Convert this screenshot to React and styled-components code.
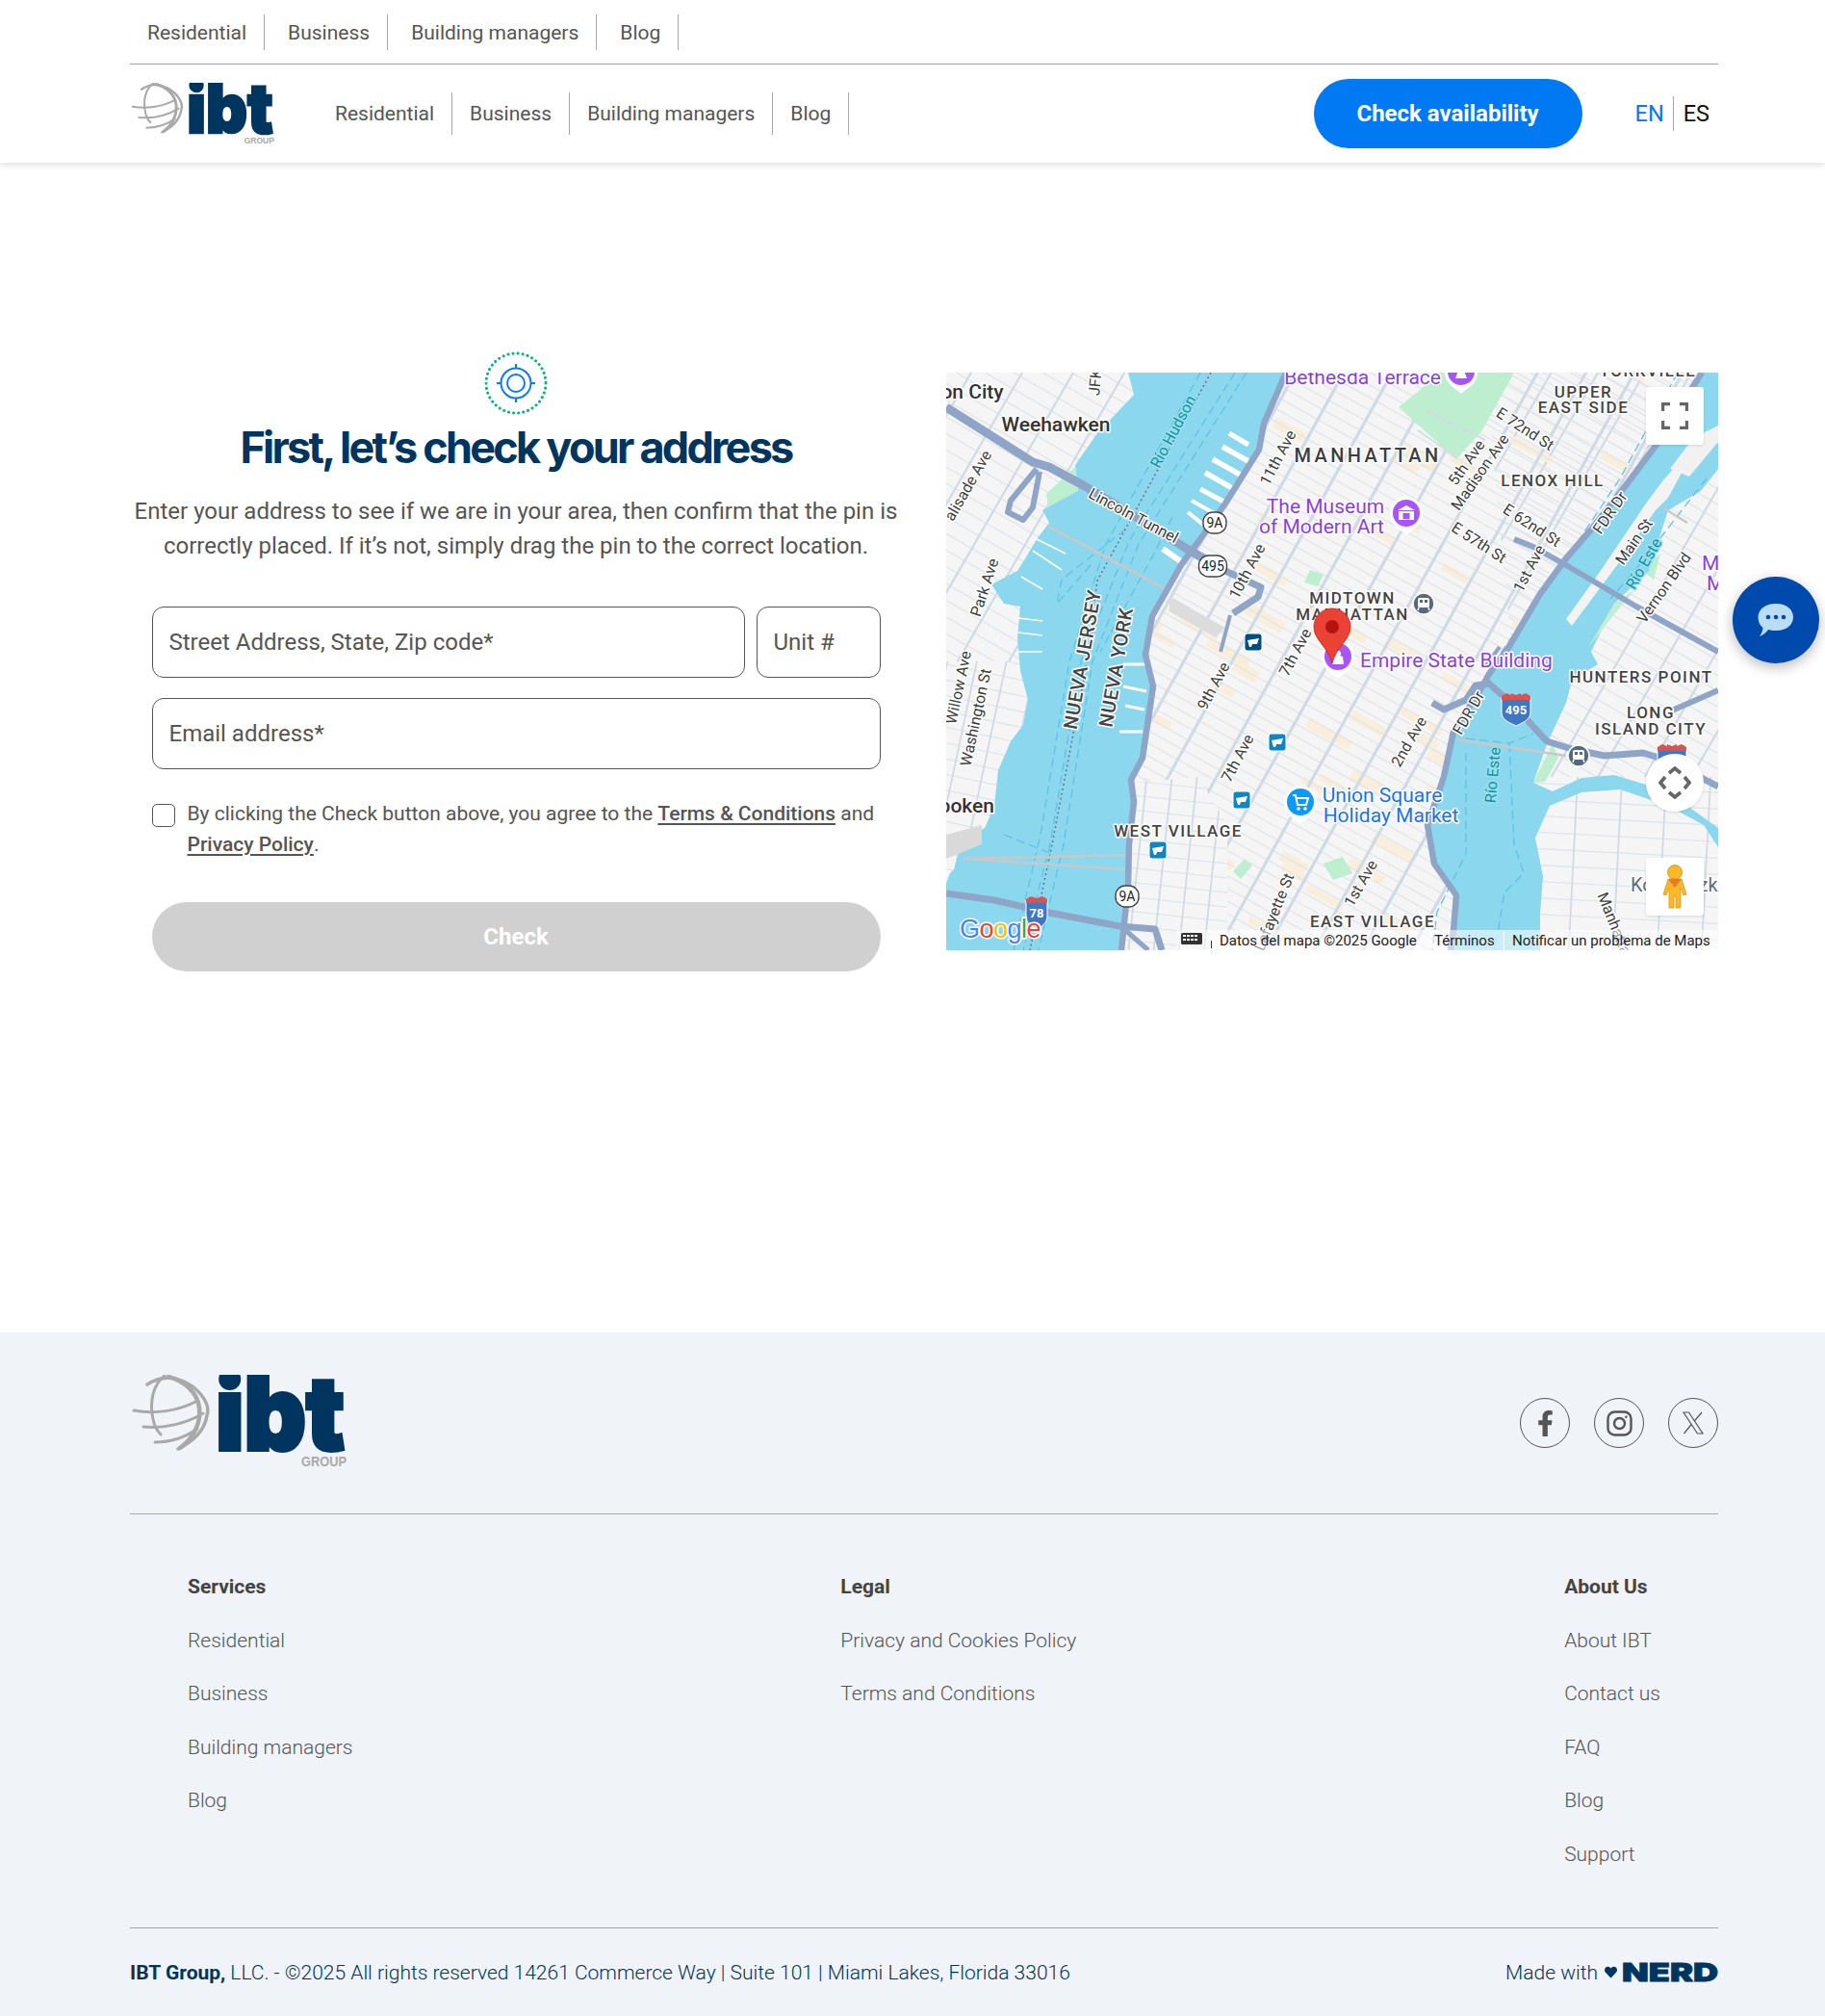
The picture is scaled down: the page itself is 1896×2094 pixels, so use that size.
import React from "react";
import styled, { createGlobalStyle, css } from "styled-components";
import { FaFacebookF, FaHeart } from "react-icons/fa";

const Global = createGlobalStyle`
  html, body { margin: 0; padding: 0; background: #fff; }
  body { font-family: Roboto, "Liberation Sans", sans-serif; color: #555; width: 1896px; }
  * { box-sizing: border-box; }
  a { color: inherit; text-decoration: none; }
  ::placeholder { color: #555; opacity: 1; }
`;

const Page = styled.div`
  position: relative;
  width: 1896px;
  height: 2094px;
  overflow: hidden;
  display: flex;
  flex-direction: column;
`;
const Header = styled.header`
  position: relative;
  z-index: 2;
  background: #fff;
  height: 169px;
  box-shadow: 0 2px 7px rgba(0, 0, 0, 0.14);
`;
const Container = styled.div`
  width: 1650px;
  margin-left: 135px;
`;
const TopRow = styled.div`
  height: 67px;
  padding-top: 1px;
  border-bottom: 1px solid #a3a3a3;
  display: flex;
  align-items: center;
`;
const MainRow = styled.div`
  height: 102px;
  display: flex;
  align-items: center;
`;
const NavList = styled.nav`
  display: flex;
  gap: ${(p) => p.$gap}px;
  margin-left: ${(p) => p.$offset}px;
`;
const NavItem = styled.a`
  display: flex;
  align-items: center;
  height: ${(p) => p.$height}px;
  padding: 0 18px;
  font-size: 21px;
  color: #555;
  border-right: 1px solid #a8a8a8;
`;
const CTA = styled.a`
  margin-left: auto;
  width: 279px;
  height: 72px;
  border-radius: 36px;
  background: #0079f2;
  color: #fff;
  font-size: 24px;
  font-weight: 700;
  display: flex;
  align-items: center;
  justify-content: center;
`;
const Lang = styled.div`
  display: flex;
  margin: 0 9px 0 55px;
`;
const LangItem = styled.a`
  height: 36px;
  display: flex;
  align-items: center;
  font-size: 23.5px;
  color: ${(p) => (p.$active ? "#0079f2" : "#111")};
  ${(p) =>
    p.$active
      ? css`
          padding-right: 9px;
          border-right: 1px solid #a8a8a8;
        `
      : css`
          padding-left: 10px;
        `}
`;
const Main = styled.main`
  flex: 1;
  padding-top: 196px;
  height: 1215px;
`;
const Columns = styled.div`
  display: grid;
  grid-template-columns: 802px 802px;
  gap: 46px;
  align-items: center;
`;
const FormColumn = styled.section`
  display: flex;
  flex-direction: column;
  align-items: center;
`;
const Title = styled.h1`
  margin: 2px 0 0;
  font-family: Inter, sans-serif;
  font-weight: 650;
  font-size: 45px;
  line-height: 64px;
  letter-spacing: -2.75px;
  color: #00355f;
  white-space: nowrap;
`;
const Lead = styled.p`
  margin: 16px 0 0;
  font-size: 24px;
  line-height: 36px;
  color: #555;
  text-align: center;
  white-space: nowrap;
`;
const Form = styled.form`
  width: 757px;
  margin-top: 45px;
  display: flex;
  flex-direction: column;
`;
const InputRow = styled.div`
  display: flex;
  gap: 12px;
  margin-bottom: 21px;
`;
const Field = styled.input`
  height: 74px;
  width: ${(p) => p.$width || "100%"};
  flex: ${(p) => (p.$width ? "none" : 1)};
  min-width: 0;
  border: 1px solid #555;
  border-radius: 12px;
  padding: 0 17px;
  font: 400 24px Roboto, sans-serif;
  color: #555;
  background: #fff;
`;
const ConsentRow = styled.label`
  display: flex;
  gap: 13px;
  margin-top: 9px;
  font-size: 21px;
  line-height: 32px;
  color: #555;
`;
const Box = styled.span`
  flex: none;
  width: 24px;
  height: 24px;
  margin-top: 6px;
  border: 1px solid #555;
  border-radius: 5px;
  background: #fff;
`;
const StrongLink = styled.a`
  font-weight: 500;
  text-decoration: underline;
  text-underline-offset: 3px;
`;
const Submit = styled.button`
  margin-top: 44px;
  height: 72px;
  border: 0;
  border-radius: 36px;
  background: #d0d0d0;
  color: #fff;
  font: 700 24px Roboto, sans-serif;
`;
const MapBox = styled.div`
  position: relative;
  width: 802px;
  height: 600px;
  overflow: hidden;
  background: #f5f5f5;
`;
const MapSvg = styled.svg`
  display: block;
  font-family: Roboto, sans-serif;
`;
const labelKinds = {
  place: css`font-size: 21px; font-weight: 500; fill: #333;`,
  hood: css`font-size: 17px; font-weight: 500; fill: #444; letter-spacing: 1.5px;`,
  big: css`font-size: 20px; font-weight: 500; fill: #3d3d3d; letter-spacing: 3.4px;`,
  state: css`font-size: 20px; font-weight: 500; fill: #444; letter-spacing: 0.6px;`,
  road: css`font-size: 16px; font-weight: 400; fill: #3c3c3c;`,
  river: css`font-size: 16px; font-weight: 400; fill: #11929f; stroke: #9be0f0;`,
  poi: css`font-size: 21px; font-weight: 400; fill: #8a3fe0;`,
  shop: css`font-size: 21px; font-weight: 400; fill: #1a73e8;`,
  area: css`font-size: 20px; font-weight: 400; fill: #5a6e80;`,
};
const MapLabel = styled.text`
  stroke: #fff;
  stroke-width: 3px;
  stroke-linejoin: round;
  paint-order: stroke;
  dominant-baseline: middle;
  ${(p) => labelKinds[p.$kind]}
`;
const Attribution = styled.text`
  font-size: 15px;
  fill: #222;
  dominant-baseline: middle;
`;
const GoogleMark = styled.text`
  font-family: "Liberation Sans", sans-serif;
  font-size: 27px;
  font-weight: 400;
  stroke: #fff;
  stroke-width: 3px;
  paint-order: stroke;
  letter-spacing: -0.5px;
`;
const ShieldText = styled.text`
  font-size: ${(p) => p.$size || 14}px;
  font-weight: ${(p) => p.$weight || 400};
  fill: ${(p) => p.$fill || "#222"};
  text-anchor: middle;
  dominant-baseline: middle;
`;
const MapButton = styled.button`
  position: absolute;
  left: 727px;
  top: ${(p) => p.$top}px;
  width: 60px;
  height: 60px;
  padding: 0;
  border: 0;
  background: #fff;
  border-radius: ${(p) => (p.$round ? "50%" : "3px")};
  box-shadow: 0 1px 3px rgba(0, 0, 0, 0.12);
  display: flex;
  align-items: center;
  justify-content: center;
`;
const ChatFab = styled.button`
  position: absolute;
  left: 1800px;
  top: 599px;
  width: 90px;
  height: 90px;
  border: 0;
  padding: 0;
  border-radius: 50%;
  background: #004aad;
  box-shadow: 0 4px 14px rgba(0, 0, 0, 0.28);
  display: flex;
  align-items: center;
  justify-content: center;
  z-index: 3;
`;
const Footer = styled.footer`
  height: 710px;
  background: #f0f3f8;
`;
const FooterTop = styled.div`
  height: 189px;
  padding-top: 44px;
  border-bottom: 1px solid #a8a8a8;
  display: flex;
  justify-content: space-between;
  align-items: flex-start;
`;
const Socials = styled.div`
  display: flex;
  gap: 25px;
  margin-top: 24px;
`;
const Social = styled.a`
  width: 52px;
  height: 52px;
  border-radius: 50%;
  border: 1.5px solid #555;
  color: #555;
  display: flex;
  align-items: center;
  justify-content: center;
`;
const LinkColumns = styled.div`
  height: 430px;
  padding: 61px 60px 0;
  border-bottom: 1px solid #a8a8a8;
  display: flex;
  justify-content: space-between;
`;
const LinkColumn = styled.div`
  display: flex;
  flex-direction: column;
  gap: 27.6px;
`;
const ColumnTitle = styled.h4`
  margin: 0;
  font-size: 21px;
  line-height: 28px;
  font-weight: 700;
  color: #444;
`;
const FooterLink = styled.a`
  font-size: 21px;
  line-height: 28px;
  font-weight: 300;
  color: #555;
`;
const Legal = styled.div`
  height: 91px;
  display: flex;
  align-items: center;
  justify-content: space-between;
  font-size: 21px;
  font-weight: 300;
  color: #00355f;
`;
const LegalStrong = styled.strong`
  font-weight: 700;
`;
const MadeWith = styled.div`
  display: flex;
  align-items: center;
`;
const HeartWrap = styled.span`
  display: flex;
  margin: 0 5px 0 7px;
  color: #00355f;
`;
const Nerd = styled.span`
  display: inline-block;
  font-family: Inter, sans-serif;
  font-weight: 900;
  font-size: 26px;
  line-height: 26px;
  color: #00355f;
  width: 100px;
  transform: scaleX(1.39);
  transform-origin: left center;
  -webkit-text-stroke: 0.8px #00355f;
`;

/* ---------- logo ---------- */
const LogoSvg = styled.svg`
  display: block;
  flex: none;
`;
const LogoWord = styled.text`
  font-family: Inter, sans-serif;
  font-weight: 900;
  font-size: 106px;
  fill: #00355f;
  stroke: #00355f;
  stroke-width: 4px;
  stroke-linejoin: miter;
`;
const LogoGroup = styled.text`
  font-family: "Liberation Sans", sans-serif;
  font-size: 14px;
  font-weight: 700;
  fill: #aaa;
`;
function Logo({ width }) {
  return (
    <LogoSvg width={width} height={(width * 95) / 225} viewBox="0 0 225 95">
      <g fill="none" stroke="#a9a9a9" strokeLinecap="round">
        <path d="M18 10 C30 2 44 1 58 8 C72 15 84 30 80 42 C78 56 68 68 50 77" strokeWidth="3.5" />
        <path d="M36 1 C24 10 20 28 24 46 C25 52 28 58 32 62" strokeWidth="3" />
        <path d="M40 2 C56 6 70 18 72 34 C74 50 66 66 52 76" strokeWidth="4.5" />
        <path d="M4 37 C25 41 50 38 70 27" strokeWidth="3" />
        <path d="M14 54 C35 56 58 51 76 40" strokeWidth="3" />
        <path d="M26 70 C40 70 56 66 70 56" strokeWidth="3" />
      </g>
      <LogoWord x="89" y="78" textLength="134" lengthAdjust="spacingAndGlyphs">ibt</LogoWord>
      <LogoGroup x="178" y="94.5" textLength="47" lengthAdjust="spacingAndGlyphs">GROUP</LogoGroup>
    </LogoSvg>
  );
}

/* ---------- map data ---------- */
const HUDSON =
  "M189,0 L195,23 L157,63 L134,96 L137,123 L100,143 L107,156 L94,173 L84,190 L74,206 L47,220 L60,240 L77,243 L74,276 L77,310 L85,340 L80,366 L67,383 L54,413 L50,450 L40,473 L14,492 L8,516 L4,520 L0,530 L0,600 L182,600 L189,533 L190,490 L195,446 L192,423 L204,400 L215,326 L207,303 L207,293 L214,253 L244,200 L264,173 L290,136 L325,80 L330,53 L350,13 L356,0 Z";
const EAST_RIVER =
  "M785,0 L737,76 L707,116 L670,163 L644,193 L617,230 L584,286 L564,313 L557,326 L527,373 L517,420 L500,470 L507,510 L530,543 L527,580 L524,600 L617,600 L617,563 L620,523 L612,483 L627,450 L660,436 L700,433 L750,450 L787,470 L802,493 L802,473 L770,450 L737,431 L694,418 L660,421 L630,435 L610,426 L624,386 L644,343 L650,320 L677,303 L670,290 L694,240 L730,206 L750,143 L784,123 L802,100 L802,0 Z";
const MANHATTAN =
  "M353,0 L330,53 L325,80 L290,136 L264,173 L244,200 L214,253 L207,293 L215,326 L204,400 L192,423 L195,446 L190,490 L189,533 L182,600 L524,600 L527,580 L530,543 L507,510 L500,470 L517,420 L527,373 L557,326 L564,313 L584,286 L617,230 L644,193 L670,163 L707,116 L737,76 L785,0 Z";

const range = (n) => Array.from({ length: n }, (_, i) => i);
let seed = 17;
const rnd = () => {
  seed = (seed * 16807) % 2147483647;
  return seed / 2147483647;
};
const beige = range(260).map(() => ({
  x: -250 + rnd() * 1250,
  y: -250 + rnd() * 1000,
  w: 22 + rnd() * 30,
  h: 7 + rnd() * 6,
}));

function Grid({ angle, cx = 400, cy = 300, gap, cross, color = "#e0e5ea", crossColor = "#d0dae4", crossWidth = 3.2 }) {
  return (
    <g transform={`rotate(${angle} ${cx} ${cy})`}>
      {range(Math.ceil(1300 / gap)).map((i) => (
        <line key={i} x1="-300" x2="1100" y1={-350 + i * gap} y2={-350 + i * gap} stroke={color} strokeWidth="1.3" />
      ))}
      {range(Math.ceil(1500 / cross)).map((i) => (
        <line key={i} y1="-400" y2="1000" x1={-350 + i * cross} x2={-350 + i * cross} stroke={crossColor} strokeWidth={crossWidth} />
      ))}
    </g>
  );
}

const ROADS = [
  ["M0,36 L90,93 L107,98 L144,118 L197,150 L250,183 L290,206", 9],
  ["M290,206 L327,223 L324,233 L298,250", 7],
  ["M94,100 L67,133 L64,145 L80,153 L90,140 L97,103", 6],
  ["M295,252 L285,290", 4],
  ["M353,0 L330,53 L325,80 L290,136 L264,173 L244,200 L214,253 L207,293 L215,326 L204,400 L192,423 L195,446 L190,490 L189,533 L182,600", 6.5],
  ["M785,0 L737,76 L707,116 L670,163 L644,193 L617,230 L584,286 L564,313 L557,326 L527,373 L517,420 L500,470 L507,510 L530,543 L527,580 L524,600", 6.5],
  ["M590,173 L610,181 L644,200 L717,243 L802,290", 6],
  ["M505,343 L517,350 L540,340 L550,325 L564,323 L590,346 L624,383 L650,391 L684,398 L724,395 L750,403 L802,430", 7],
  ["M802,330 L754,351", 6],
  ["M0,541 L50,548 L107,561 L180,575 L217,578 L224,600", 7],
  ["M187,580 L210,600", 5],
  ["M560,305 L575,285", 4],
];
const BRIDGES = [
  "M107,160 L230,226",
  "M530,381 L644,398",
  "M17,505 L187,501",
  "M17,505 L187,516",
  "M744,140 L770,156",
];
const PIERS = [
  ["M294,63 L314,75", 5.5], ["M287,77 L314,92", 5.5], ["M277,90 L307,107", 5.5], ["M269,104 L297,120", 5.5], ["M264,121 L290,135", 5], ["M255,133 L280,147", 4], ["M251,145 L267,158", 4],
  ["M225,183 L245,197", 6], ["M180,373 L204,373", 3], ["M186,346 L206,350", 3], ["M184,326 L208,331", 3], ["M184,303 L210,303", 3],
  ["M92,172 L124,188", 1.6], ["M90,185 L120,205", 1.6], ["M78,212 L100,225", 1.6], ["M75,255 L100,258", 1.4], ["M75,270 L100,273", 1.4], ["M75,290 L100,290", 1.4],
];
const GREENS = [
  "M470,36 L514,0 L590,0 L557,60 L530,90 Z",
  "M104,126 L134,98 L137,123 L108,150 Z",
  "M313,45 L330,30 L326,60 Z",
  "M186,370 L200,362 L198,378 Z",
  "M610,426 L630,385 L636,400 L622,425 Z",
  "M648,316 L670,296 L662,312 L652,322 Z",
  "M392,510 L412,503 L422,520 L402,527 Z",
  "M310,505 L318,512 L306,526 L298,518 Z",
  "M378,205 L392,210 L386,222 L372,218 Z",
  "M722,205 L742,188 L735,215 Z",
];
const LABELS = [
  ["on City", 27, 19, 0, "place"],
  ["Weehawken", 114, 53, 0, "place"],
  ["JFK", 154, 10, -85, "road"],
  ["Río Hudson", 235, 61, -62, "river"],
  ["alisade Ave", 22, 117, -60, "road"],
  ["Park Ave", 39, 223, -72, "road"],
  ["Willow Ave", 12, 327, -78, "road"],
  ["Washington St", 30, 358, -78, "road"],
  ["Lincoln Tunnel", 195, 148, 28, "road"],
  ["NUEVA JERSEY", 141, 298, -80, "state"],
  ["NUEVA YORK", 176, 306, -80, "state"],
  ["11th Ave", 344, 88, -62, "road"],
  ["10th Ave", 312, 206, -62, "road"],
  ["7th Ave", 362, 290, -62, "road"],
  ["9th Ave", 277, 325, -62, "road"],
  ["7th Ave", 302, 400, -62, "road"],
  ["2nd Ave", 480, 383, -60, "road"],
  ["1st Ave", 430, 530, -60, "road"],
  ["1st Ave", 605, 203, -62, "road"],
  ["5th Ave", 540, 93, -55, "road"],
  ["Madison Ave", 554, 103, -55, "road"],
  ["E 72nd St", 602, 58, 33, "road"],
  ["E 62nd St", 609, 158, 33, "road"],
  ["E 57th St", 554, 176, 33, "road"],
  ["FDR Dr", 689, 145, -55, "road"],
  ["FDR Dr", 542, 353, -60, "road"],
  ["Main St", 714, 175, -55, "road"],
  ["Vernon Blvd", 745, 223, -55, "road"],
  ["Río Este", 724, 198, -60, "river"],
  ["Río Este", 567, 418, -85, "river"],
  ["Lafayette St", 340, 560, -68, "road"],
  ["Manhattan Ave", 702, 590, 68, "road"],
  ["MANHATTAN", 438, 86, 0, "big"],
  ["YORKVILLE", 729, -2, 0, "hood"],
  ["UPPER", 662, 20, 0, "hood"],
  ["EAST SIDE", 662, 36, 0, "hood"],
  ["LENOX HILL", 630, 112, 0, "hood"],
  ["MIDTOWN", 422, 234, 0, "hood"],
  ["MANHATTAN", 422, 251, 0, "hood"],
  ["HUNTERS POINT", 722, 316, 0, "hood"],
  ["LONG", 732, 353, 0, "hood"],
  ["ISLAND CITY", 732, 370, 0, "hood"],
  ["WEST VILLAGE", 241, 476, 0, "hood"],
  ["EAST VILLAGE", 443, 570, 0, "hood"],
  ["The Museum", 394, 138, 0, "poi"],
  ["of Modern Art", 390, 159, 0, "poi"],
  ["Union Square", 453, 438, 0, "shop"],
  ["Holiday Market", 462, 459, 0, "shop"],
  ["Kosciuszko", 762, 532, 0, "area"],
];

function TearPin({ x, y, color, children }) {
  return (
    <g transform={`translate(${x} ${y})`}>
      <path d="M0,23 C-4,18 -17,14 -17,0 A17,17 0 1 1 17,0 C17,14 4,18 0,23 Z" fill="#fff" />
      <circle r="14" fill={color} />
      {children}
    </g>
  );
}
function Shield({ x, y, text, w = 24 }) {
  return (
    <g transform={`translate(${x} ${y})`}>
      <rect x={-w / 2} y="-11" width={w} height="22" rx="10" fill="#fff" stroke="#444" strokeWidth="1.4" />
      <ShieldText y="1" $size={14}>{text}</ShieldText>
    </g>
  );
}
function Interstate({ x, y, text, w = 30 }) {
  const h = w / 2;
  return (
    <g transform={`translate(${x} ${y})`}>
      <path d={`M${-h},-12 L${-h},4 C${-h},12 -6,15 0,18 C6,15 ${h},12 ${h},4 L${h},-12 Z`} fill="#3f77c4" stroke="#fff" />
      <path d={`M${-h},-13 L${-h},-9 L${h},-9 L${h},-13 L${h - 5},-16 L${h - 10},-14 L5,-16 L0,-14 L-5,-16 L${-h + 10},-14 L${-h + 5},-16 Z`} fill="#d9534f" />
      <ShieldText y="3" $size={13} $weight={700} $fill="#fff">{text}</ShieldText>
    </g>
  );
}
function Ferry({ x, y, dark }) {
  return (
    <g transform={`translate(${x} ${y})`}>
      <rect x="-9" y="-9" width="18" height="18" rx="3" fill={dark ? "#00507f" : "#0e86c4"} stroke="#fff" strokeWidth="1" />
      <path d="M-6,-2 L6,-4 L4,2 L-1,2 L-2,5 L-4,5 Z" fill="#fff" />
    </g>
  );
}
function Subway({ x, y }) {
  return (
    <g transform={`translate(${x} ${y})`}>
      <circle r="11" fill="#566a7e" stroke="#fff" strokeWidth="1.5" />
      <rect x="-6" y="-6" width="12" height="10" rx="2" fill="#fff" />
      <rect x="-4" y="-4" width="3" height="3" fill="#566a7e" />
      <rect x="1" y="-4" width="3" height="3" fill="#566a7e" />
      <path d="M-5,4 L-6,7 M5,4 L6,7" stroke="#fff" strokeWidth="1.5" />
    </g>
  );
}

function MapDrawing() {
  return (
    <MapSvg width="802" height="600" viewBox="0 0 802 600">
      <defs>
        <clipPath id="mh"><path d={MANHATTAN} /></clipPath>
        <clipPath id="njTop"><rect x="0" y="0" width="210" height="300" /></clipPath>
        <clipPath id="njLow"><rect x="0" y="300" width="110" height="300" /></clipPath>
        <clipPath id="qTop"><path d="M560,0 H802 V420 H600 Z" /></clipPath>
        <clipPath id="qLow"><rect x="600" y="420" width="202" height="180" /></clipPath>
        <clipPath id="wv"><path d="M193,426 L262,420 L292,470 L292,600 L182,600 Z" /></clipPath>
      </defs>
      <rect width="802" height="600" fill="#f5f5f5" />
      <g clipPath="url(#njTop)"><Grid angle={30} gap={15} cross={46} crossWidth={2.2} /></g>
      <g clipPath="url(#njLow)"><Grid angle={12} gap={16} cross={30} crossWidth={1.8} /></g>
      <g clipPath="url(#qTop)"><Grid angle={30} gap={14} cross={42} crossWidth={2.2} /></g>
      <g clipPath="url(#qLow)"><Grid angle={3} gap={17} cross={46} crossWidth={1.8} /></g>
      <g clipPath="url(#mh)">
        <g transform="rotate(29 400 300)">
          {beige.map((b, i) => (
            <rect key={i} x={b.x} y={b.y} width={b.w} height={b.h} fill="#f8eeda" />
          ))}
        </g>
        <Grid angle={29} gap={11.5} cross={44} color="#e2e5e9" />
        <g clipPath="url(#wv)">
          <rect x="180" y="415" width="120" height="190" fill="#f5f5f5" />
          <Grid angle={6} gap={15} cross={26} crossWidth={1.8} />
        </g>
      </g>
      {GREENS.map((d) => (
        <path key={d} d={d} fill="#bdeecf" />
      ))}
      <path d="M500,40 L560,70 M490,60 L530,88" stroke="#d3dcdf" strokeWidth="2" fill="none" />
      <path d={HUDSON} fill="#8bd8ee" />
      <path d={EAST_RIVER} fill="#8bd8ee" />
      <path d="M764,90 L770,93 L750,130 L737,143 L697,200 L650,263 L644,256 L677,210 L727,136 L744,113 Z" fill="#f3f3f3" />
      <path d="M802,55 L802,72 L772,108 L752,100 L776,68 Z" fill="#f1f1f1" />
      <path d="M694,240 L716,225 L690,256 L678,272 L668,284 Z" fill="#c2eed3" />
      <g stroke="#fff" fill="none">
        {PIERS.map(([d, w]) => (
          <path key={d} d={d} strokeWidth={w} />
        ))}
      </g>
      <g fill="none" stroke="#5cc3e6" strokeWidth="1.3" strokeDasharray="9 5">
        <path d="M300,0 L190,175 L140,300 L108,490 L80,600" />
        <path d="M312,0 L200,178 L152,300 L122,490 L96,600" />
        <path d="M264,0 L165,180 L128,300 L98,480 L70,600" />
        <path d="M150,200 L115,240 L120,215 L190,160" />
        <path d="M235,150 L215,190 L160,290" />
        <path d="M60,480 L110,500" />
        <path d="M760,0 L700,110 L640,200 L570,300" />
        <path d="M790,110 L720,200 L690,235" />
        <path d="M540,395 L540,500 L510,560 L505,600" />
        <path d="M585,385 L590,490 L600,520 L580,540 L570,600" />
        <path d="M540,380 L585,385 L610,375" />
      </g>
      <path d="M275,0 L157,216 L144,313 L110,490 L87,600" fill="none" stroke="#7a6a8a" strokeWidth="1.5" strokeDasharray="2 3" />
      <path d="M0,480 L37,470 L37,490 L0,505 Z" fill="#d9d9d9" />
      <path d="M232,232 L290,265 L280,275 L232,248 Z" fill="#dcdcdc" />
      <g fill="none" stroke="#c8c8c8" strokeWidth="2.6">
        {BRIDGES.map((d) => (
          <path key={d} d={d} />
        ))}
      </g>
      <g fill="none" stroke="#8fa5c8" strokeLinejoin="round">
        {ROADS.map(([d, w]) => (
          <path key={d} d={d} strokeWidth={w} />
        ))}
      </g>
      <g textAnchor="middle">
        {LABELS.map(([t, x, y, r, k], i) => (
          <MapLabel key={i} $kind={k} x={x} y={y} dy={2} transform={r ? `rotate(${r} ${x} ${y})` : undefined}>
            {t}
          </MapLabel>
        ))}
      </g>
      <MapLabel $kind="poi" x="514" y="5" dy={1} textAnchor="end">Bethesda Terrace</MapLabel>
      <MapLabel $kind="poi" x="430" y="298" dy={2}>Empire State Building</MapLabel>
      <MapLabel $kind="poi" x="785" y="197" dy={2}>M</MapLabel>
      <MapLabel $kind="poi" x="790" y="218" dy={2}>M</MapLabel>
      <MapLabel $kind="place" x="50" y="449" dy={2} textAnchor="end">Hoboken</MapLabel>

      <Shield x={279} y={156} text="9A" />
      <Shield x={277} y={201} text="495" w={29} />
      <Shield x={188} y={544} text="9A" />
      <Interstate x={592} y={349} text="495" />
      <Interstate x={94} y={560} text="78" w={22} />
      <Interstate x={754} y={402} text="" />
      <Ferry x={319} y={280} dark />
      <Ferry x={344} y={384} />
      <Ferry x={307} y={444} />
      <Ferry x={220} y={496} />
      <Subway x={496} y={240} />
      <Subway x={657} y={398} />
      <TearPin x={535} y={-1} color="#a855f7">
        <path d="M-6,7 H6 L3,-1 A3,4 0 1 0 -3,-1 Z" fill="#fff" />
      </TearPin>
      <TearPin x={478} y={146} color="#a855f7">
        <path d="M-9,-3 L0,-8 L9,-3 Z M-8,-2 H8 V7 H-8 Z" fill="#fff" />
        <rect x="-3.5" y="0" width="7" height="6" fill="#a855f7" />
      </TearPin>
      <TearPin x={407} y={295} color="#a855f7">
        <path d="M-6,8 L-5,0 L-2,-1 A3,3 0 1 1 2,-1 L5,0 L6,8 Z" fill="#fff" />
      </TearPin>
      <TearPin x={368} y={446} color="#0b9af5">
        <path d="M-8,-7 H-5 L-3,3 H6 L8,-4 H-4" fill="none" stroke="#fff" strokeWidth="2" />
        <circle cx="-2" cy="7" r="1.8" fill="#fff" />
        <circle cx="5" cy="7" r="1.8" fill="#fff" />
      </TearPin>
      <path d="M401,302 C397,285 382,278 382,264 A19,19 0 1 1 420,264 C420,278 405,285 401,302 Z" fill="#ea4335" stroke="#c5221f" strokeWidth="0.8" />
      <circle cx="401" cy="264" r="7" fill="#b31412" />

      <rect x="240" y="579" width="562" height="21" fill="#fff" fillOpacity="0.55" />
      <g fill="#333">
        <rect x="244" y="582" width="22" height="12" rx="1.5" />
        <path d="M246,584 h3 v2 h-3z M250,584 h3 v2 h-3z M254,584 h3 v2 h-3z M258,584 h3 v2 h-3z M246,588 h3 v2 h-3z M250,588 h3 v2 h-3z M254,588 h3 v2 h-3z M258,588 h3 v2 h-3z" fill="#fff" />
        <rect x="275" y="590" width="1" height="8" />
      </g>
      <Attribution x="284" y="591">Datos del mapa ©2025 Google</Attribution>
      <Attribution x="507" y="591">Términos</Attribution>
      <rect x="579" y="580" width="1" height="20" fill="#fff" fillOpacity="0.8" />
      <Attribution x="588" y="591">Notificar un problema de Maps</Attribution>
      <GoogleMark x="14" y="587">
        <tspan fill="#4285f4">G</tspan>
        <tspan fill="#ea4335">o</tspan>
        <tspan fill="#fbbc05">o</tspan>
        <tspan fill="#4285f4">g</tspan>
        <tspan fill="#34a853">l</tspan>
        <tspan fill="#ea4335">e</tspan>
      </GoogleMark>
    </MapSvg>
  );
}

const Links = {
  Services: ["Residential", "Business", "Building managers", "Blog"],
  Legal: ["Privacy and Cookies Policy", "Terms and Conditions"],
  "About Us": ["About IBT", "Contact us", "FAQ", "Blog", "Support"],
};
const NAV = ["Residential", "Business", "Building managers", "Blog"];

export default function App() {
  return (
    <Page>
      <Global />
      <Header>
        <Container>
          <TopRow>
            <NavList $gap={6} $offset={0}>
              {NAV.map((n) => (
                <NavItem key={n} $height={37}>{n}</NavItem>
              ))}
            </NavList>
          </TopRow>
          <MainRow>
            <Logo width={150} />
            <NavList $gap={0} $offset={45}>
              {NAV.map((n) => (
                <NavItem key={n} $height={44}>{n}</NavItem>
              ))}
            </NavList>
            <CTA>Check availability</CTA>
            <Lang>
              <LangItem $active>EN</LangItem>
              <LangItem>ES</LangItem>
            </Lang>
          </MainRow>
        </Container>
      </Header>
      <Main>
        <Container>
          <Columns>
            <FormColumn>
              <svg width="66" height="66" viewBox="0 0 66 66">
                <circle cx="33" cy="33" r="31" fill="none" stroke="#00b87c" strokeWidth="3" strokeLinecap="round" strokeDasharray="0.1 5" />
                <g fill="none" stroke="#0a7cf0" strokeWidth="2">
                  <circle cx="33" cy="33" r="15.5" />
                  <circle cx="33" cy="33" r="9" />
                  <path d="M33 13 V18 M33 48 V53 M13 33 H18 M48 33 H53" />
                </g>
              </svg>
              <Title>First, let’s check your address</Title>
              <Lead>
                Enter your address to see if we are in your area, then confirm that the pin is
                <br />
                correctly placed. If it’s not, simply drag the pin to the correct location.
              </Lead>
              <Form>
                <InputRow>
                  <Field placeholder="Street Address, State, Zip code*" />
                  <Field $width="129px" placeholder="Unit #" />
                </InputRow>
                <InputRow>
                  <Field placeholder="Email address*" />
                </InputRow>
                <ConsentRow>
                  <Box />
                  <span>
                    By clicking the Check button above, you agree to the{" "}
                    <StrongLink>Terms &amp; Conditions</StrongLink> and <StrongLink>Privacy Policy</StrongLink>.
                  </span>
                </ConsentRow>
                <Submit type="button">Check</Submit>
              </Form>
            </FormColumn>
            <MapBox>
              <MapDrawing />
              <MapButton $top={15}>
                <svg width="28" height="28" viewBox="0 0 28 28" fill="none" stroke="#666" strokeWidth="3.4">
                  <path d="M1.5 9 V1.5 H9 M19 1.5 H26.5 V9 M26.5 19 V26.5 H19 M9 26.5 H1.5 V19" />
                </svg>
              </MapButton>
              <MapButton $top={396} $round>
                <svg width="34" height="34" viewBox="0 0 34 34" fill="none" stroke="#666" strokeWidth="3.6">
                  <path d="M11 7 L17 2 L23 7 M11 27 L17 32 L23 27 M7 11 L2 17 L7 23 M27 11 L32 17 L27 23" />
                </svg>
              </MapButton>
              <MapButton $top={504}>
                <svg width="28" height="46" viewBox="0 0 28 46">
                  <circle cx="14" cy="8" r="7.5" fill="#fbb829" stroke="#c98a10" strokeWidth="0.8" />
                  <path d="M7 15 H21 L26 31 L23 32 L20 24 V45 H15 V33 H13 V45 H8 V24 L5 32 L2 31 Z" fill="#fbb829" stroke="#d59a1c" strokeWidth="0.8" />
                  <path d="M7 15 H21 L14 24 Z" fill="#e8792b" />
                </svg>
              </MapButton>
            </MapBox>
          </Columns>
        </Container>
      </Main>
      <Footer>
        <Container>
          <FooterTop>
            <Logo width={225} />
            <Socials>
              <Social><FaFacebookF size={27} /></Social>
              <Social>
                <svg width="27" height="27" viewBox="0 0 27 27" fill="none" stroke="#555" strokeWidth="2.4">
                  <rect x="1.5" y="1.5" width="24" height="24" rx="7" />
                  <circle cx="13.5" cy="13.5" r="5.5" />
                  <circle cx="20.3" cy="6.7" r="1.2" fill="#555" stroke="none" />
                </svg>
              </Social>
              <Social>
                <svg width="24" height="26" viewBox="0 0 24 26" fill="none" stroke="#555" strokeWidth="1.2">
                  <path d="M2 2 H7.5 L22 24 H16.5 Z" />
                  <path d="M21 2 L13.3 11 M10.2 14.5 L2.5 24" />
                </svg>
              </Social>
            </Socials>
          </FooterTop>
          <LinkColumns>
            {Object.entries(Links).map(([title, items]) => (
              <LinkColumn key={title}>
                <ColumnTitle>{title}</ColumnTitle>
                {items.map((i) => (
                  <FooterLink key={i}>{i}</FooterLink>
                ))}
              </LinkColumn>
            ))}
          </LinkColumns>
          <Legal>
            <span>
              <LegalStrong>IBT Group,</LegalStrong> LLC. - ©2025 All rights reserved 14261 Commerce Way | Suite 101 | Miami Lakes, Florida 33016
            </span>
            <MadeWith>
              Made with
              <HeartWrap><FaHeart size={13} /></HeartWrap>
              <Nerd>NERD</Nerd>
            </MadeWith>
          </Legal>
        </Container>
      </Footer>
      <ChatFab>
        <svg width="40" height="36" viewBox="0 0 40 36">
          <path d="M20 1 C31 1 38 7 38 15 C38 23 31 29 20 29 C17 29 14 28.5 12 28 C10 31 6 34 3 35 C5 32 6.5 29 6.5 26 C3 23.5 1.5 19.5 1.5 15 C1.5 7 9 1 20 1 Z" fill="#bbdcf7" />
          <circle cx="12" cy="15" r="2.3" fill="#004aad" />
          <circle cx="20" cy="15" r="2.3" fill="#004aad" />
          <circle cx="28" cy="15" r="2.3" fill="#004aad" />
        </svg>
      </ChatFab>
    </Page>
  );
}
